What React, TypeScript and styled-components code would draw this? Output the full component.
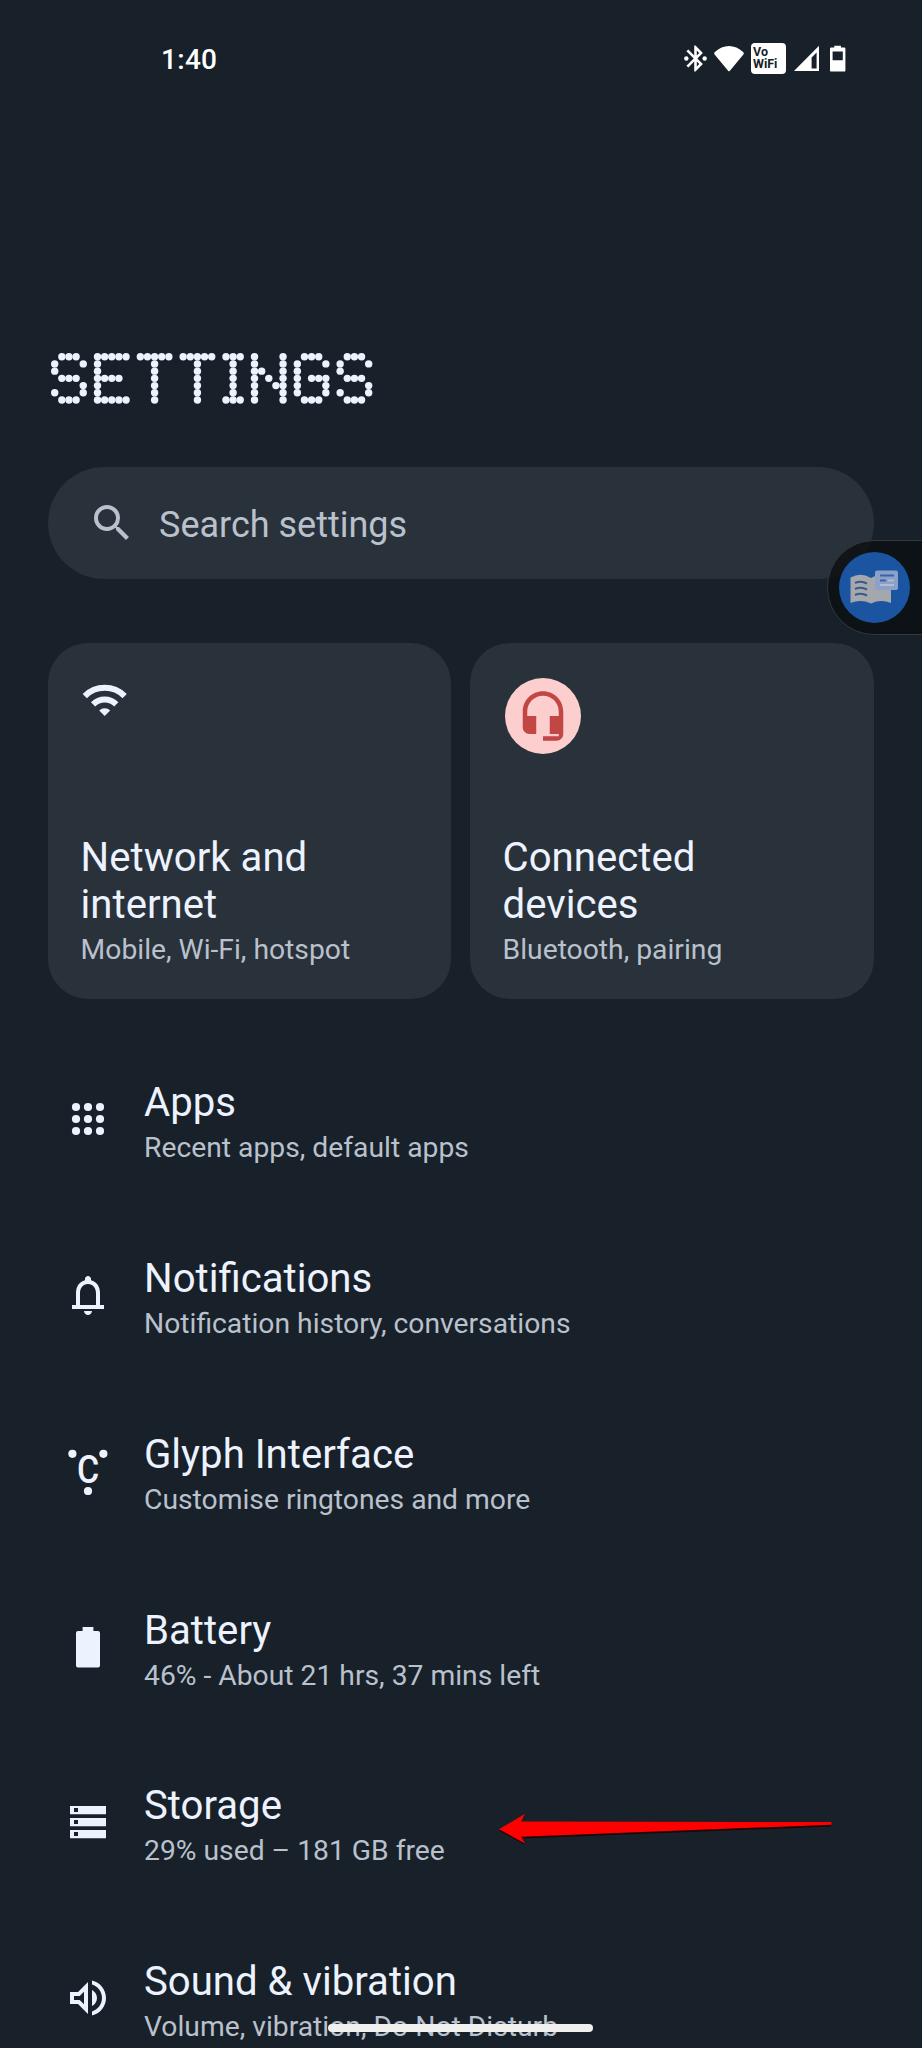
import React from 'react';
import styled, { createGlobalStyle } from 'styled-components';

const palette = {
  page: '#182029',
  surface: '#29313a',
  text: '#ecf2fe',
  muted: '#b9c1cd',
};

const GlobalStyle = createGlobalStyle`
  * { box-sizing: border-box; }
  html, body { margin: 0; padding: 0; background: ${palette.page}; }
  body { font-family: Roboto, "Noto Sans", sans-serif; overflow: hidden; }
`;

const Screen = styled.main`
  position: relative;
  width: 922px;
  height: 2048px;
  overflow: hidden;
  display: flex;
  flex-direction: column;
  background: ${palette.page};
  color: ${palette.text};
`;

const StatusBar = styled.header`
  flex: none;
  height: 116px;
  padding: 0 76px 0 161px;
  display: flex;
  align-items: center;
  justify-content: space-between;
`;

const Clock = styled.time`
  padding-top: 3px;
  font-size: 28px;
  font-weight: 500;
  letter-spacing: 0.3px;
  line-height: 34px;
  color: #fff;
`;

const StatusIcons = styled.div`
  display: flex;
  align-items: center;
  color: #fff;
  svg { display: block; }
`;

const VoWifi = styled.div`
  width: 35px;
  height: 31px;
  margin: 0 8px 0 6px;
  padding: 3px 0 0 2px;
  border-radius: 4px;
  background: #fff;
  color: ${palette.page};
  font-size: 12.5px;
  font-weight: 700;
  line-height: 12.4px;
`;

const Heading = styled.h1`
  flex: none;
  margin: 0;
  padding: 237px 0 0 51px;
  height: 350.7px;
  line-height: 0;
`;

const SearchBar = styled.div`
  flex: none;
  display: flex;
  align-items: center;
  width: 826px;
  height: 112px;
  margin: 0 48px;
  padding-left: 40px;
  gap: 23px;
  border-radius: 56px;
  background: ${palette.surface};
  color: ${palette.muted};
  font-size: 36px;
  line-height: 42px;
`;

const SearchHint = styled.span`
  padding-top: 4px;
`;

const Cards = styled.section`
  flex: none;
  display: grid;
  grid-template-columns: 403px 404px;
  column-gap: 19px;
  margin: 64.6px 48px 0;
`;

const Card = styled.article`
  height: 356px;
  padding: 35px 32px 31px 32.6px;
  display: flex;
  flex-direction: column;
  justify-content: space-between;
  border-radius: 40px;
  background: ${palette.surface};
`;

const DeviceBadge = styled.div`
  width: 76px;
  height: 76px;
  display: grid;
  place-items: center;
  margin-left: 2.4px;
  border-radius: 50%;
  background: #fccfce;
  color: #c14644;
`;

const Title = styled.h2`
  margin: 0 0 4px;
  font-size: 40.15px;
  font-weight: 400;
  line-height: 47px;
`;

const Summary = styled.p`
  margin: 0;
  font-size: 28.28px;
  line-height: 36px;
  color: ${palette.muted};
  white-space: nowrap;
`;

const List = styled.section`
  flex: none;
  display: flex;
  flex-direction: column;
  margin-top: 32px;
`;

const Row = styled.article`
  height: 175.8px;
  padding-left: 64px;
  display: flex;
  align-items: center;
  gap: 32px;
`;

const RowText = styled.div`
  padding-top: 7px;
`;

const AssistTab = styled.aside`
  position: absolute;
  top: 540px;
  right: -2px;
  width: 97.5px;
  height: 95px;
  padding-left: 11px;
  display: flex;
  align-items: center;
  border: 1px solid #33383d;
  border-radius: 47px 0 0 47px;
  background: rgba(11, 15, 19, 0.8);
`;

const AssistButton = styled.div`
  width: 71.5px;
  height: 71.5px;
  display: grid;
  place-items: center;
  border-radius: 50%;
  background: #1b54a0;
`;

const Pointer = styled.svg`
  position: absolute;
  left: 490px;
  top: 1806px;
`;

const HomeHandle = styled.div`
  position: absolute;
  left: 328px;
  bottom: 16px;
  width: 265px;
  height: 8px;
  border-radius: 4px;
  background: #f0f0ef;
`;

const GLYPHS: Record<string, string[]> = {
  S: ['.###.', '#...#', '#....', '.###.', '....#', '#...#', '.###.'],
  E: ['#####', '#....', '#....', '####.', '#....', '#....', '#####'],
  T: ['#####', '..#..', '..#..', '..#..', '..#..', '..#..', '..#..'],
  I: ['###', '.#.', '.#.', '.#.', '.#.', '.#.', '###'],
  N: ['#...#', '#...#', '##..#', '#.#.#', '#..##', '#...#', '#...#'],
  G: ['.###.', '#...#', '#....', '#.###', '#...#', '#...#', '.###.'],
};

// Dot-matrix display lettering: one round lamp per lit cell, one empty column between letters.
function DotMatrix({ word }: { word: string }) {
  const stepX = 7.136;
  const stepY = 7.22;
  let column = 0;
  const dots: React.ReactNode[] = [];
  word.split('').forEach((letter, n) => {
    const rows = GLYPHS[letter];
    rows.forEach((row, y) =>
      row.split('').forEach((cell, x) => {
        if (cell === '#') {
          dots.push(
            <circle key={`${n}-${x}-${y}`} cx={3.7 + (column + x) * stepX} cy={3.7 + y * stepY} r={3.7} />,
          );
        }
      }),
    );
    column += rows[0].length + 1;
  });
  return (
    <svg width="324" height="52" fill={palette.text} aria-hidden="true">
      {dots}
    </svg>
  );
}

const IconSvg = styled.svg`
  flex: none;
`;

function Icon({ size = 48, children }: { size?: number; children: React.ReactNode }) {
  return (
    <IconSvg width={size} height={size} viewBox="0 0 24 24" fill="currentColor">
      {children}
    </IconSvg>
  );
}

const items = [
  {
    title: 'Apps',
    summary: 'Recent apps, default apps',
    icon: (
      <>
        {[6, 12, 18].map((y) => [6, 12, 18].map((x) => <circle key={`${x}${y}`} cx={x} cy={y} r="2.05" />))}
      </>
    ),
  },
  {
    title: 'Notifications',
    summary: 'Notification history, conversations',
    icon: (
      <path
        fillRule="evenodd"
        d="M18 17v-6c0-3.07-1.63-5.64-4.5-6.32V4c0-.83-.67-1.5-1.5-1.5s-1.5.67-1.5 1.5v.68C7.64 5.36 6 7.92 6 11v6H4v2h16v-2h-2zm-2 0H8v-6c0-2.48 1.51-4.5 4-4.5s4 2.02 4 4.5v6zM12 22c1.1 0 2-.9 2-2h-4c0 1.1.9 2 2 2z"
      />
    ),
  },
  {
    title: 'Glyph Interface',
    summary: 'Customise ringtones and more',
    icon: (
      <>
        <circle cx="4.2" cy="3.4" r="2.05" />
        <circle cx="19.7" cy="3.4" r="2.05" />
        <circle cx="12" cy="22" r="2.05" />
        <text transform="translate(12 17.9) scale(.88 1)" fontSize="19.3" fontWeight="500" textAnchor="middle">
          C
        </text>
      </>
    ),
  },
  {
    title: 'Battery',
    summary: '46% - About 21 hrs, 37 mins left',
    icon: <path d="M17 4h-2.3V2H9.3v2H7a1 1 0 0 0-1 1v16.3a1 1 0 0 0 1 1h10a1 1 0 0 0 1-1V5a1 1 0 0 0-1-1z" />,
  },
  {
    title: 'Storage',
    summary: '29% used – 181 GB free',
    icon: (
      <path
        fillRule="evenodd"
        d="M3 4h18v4.1H3zM5 5v2h2V5zM3 10h18v4.1H3zM5 11v2h2v-2zM3 16h18v4.1H3zM5 17v2h2v-2z"
      />
    ),
  },
  {
    title: 'Sound & vibration',
    summary: 'Volume, vibration, Do Not Disturb',
    icon: (
      <path d="M3 9v6h4l5 5V4L7 9H3zm7-.17v6.34L7.83 13H5v-2h2.83L10 8.83zM16.5 12c0-1.77-1.02-3.29-2.5-4.03v8.05c1.48-.73 2.5-2.25 2.5-4.02zM14 3.23v2.06c2.89.86 5 3.54 5 6.71s-2.11 5.85-5 6.71v2.06c4.01-.91 7-4.49 7-8.77s-2.99-7.86-7-8.77z" />
    ),
  },
];

export default function App() {
  return (
    <Screen>
      <GlobalStyle />
      <StatusBar>
        <Clock>1:40</Clock>
        <StatusIcons>
          <svg width="31" height="31" viewBox="0 0 24 24" fill="currentColor">
            <circle cx="4.9" cy="12" r="1.7" />
            <circle cx="19.1" cy="12" r="1.7" />
            <path d="M17.71 7.71L12 2h-1v7.59L6.41 5 5 6.41 10.59 12 5 17.59 6.41 19 11 14.41V22h1l5.71-5.71-4.3-4.29 4.3-4.29zM13 5.83l1.88 1.88L13 9.59V5.83zm1.88 10.46L13 18.17v-3.76l1.88 1.88z" />
          </svg>
          <svg width="34" height="31" viewBox="-1 0 34 31" fill="currentColor">
            <path d="M17.7 28Q17 28.600 16.300 28L2.400 11.200Q1.700 10 2.900 9.100C11 .9 23 .9 31.100 9.100Q32.300 10 31.600 11.200z" />
          </svg>
          <VoWifi>
            Vo
            <br />
            WiFi
          </VoWifi>
          <svg width="26" height="27" viewBox="0 0 26 27" fill="currentColor">
            <path fillRule="evenodd" d="M0 26L25 .8V26zM17.600 12.500V23.600H22.600V7.400z" />
          </svg>
          <svg width="26" height="27" viewBox="0 0 26 27" fill="currentColor">
            <path
              fillRule="evenodd"
              d="M14.300 .8h6.600v1.800h3.300a1.200 1.200 0 0 1 1.200 1.200v21.600a1.200 1.200 0 0 1-1.200 1.200H11.200a1.200 1.200 0 0 1-1.200-1.200V3.800a1.200 1.200 0 0 1 1.200-1.200h3.100zM12.600 6.600v8.600h10.200V6.600z"
            />
          </svg>
        </StatusIcons>
      </StatusBar>

      <Heading aria-label="SETTINGS">
        <DotMatrix word="SETTINGS" />
      </Heading>

      <SearchBar>
        <Icon>
          <path d="M15.5 14h-.79l-.28-.27A6.471 6.471 0 0 0 16 9.500 6.500 6.500 0 1 0 9.500 16c1.610 0 3.090-.59 4.230-1.570l.27.28v.79l5 4.990L20.490 19l-4.990-5zm-6 0C7.010 14 5 11.990 5 9.500S7.010 5 9.500 5 14 7.010 14 9.500 11.990 14 9.500 14z" />
        </Icon>
        <SearchHint>Search settings</SearchHint>
      </SearchBar>

      <Cards>
        <Card>
          <svg width="48" height="46" viewBox="0.6 0 48 46" fill="none" stroke={palette.text} strokeWidth="6">
            <path d="M4.360 18.060a28.200 28.200 0 0 1 39.880 0M12.700 26.400a16.400 16.400 0 0 1 23.200 0" />
            <path stroke="none" fill={palette.text} d="M24.300 38l-5.500-5.600a7.800 7.800 0 0 1 11 0z" />
          </svg>
          <div>
            <Title>Network and internet</Title>
            <Summary>Mobile, Wi-Fi, hotspot</Summary>
          </div>
        </Card>
        <Card>
          <DeviceBadge>
            <Icon size={54}>
              <path d="M12 1c-4.970 0-9 4.030-9 9v7c0 1.660 1.340 3 3 3h3v-8H5v-2c0-3.870 3.130-7 7-7s7 3.130 7 7v2h-4v8h4v1h-7v2h6c1.660 0 3-1.340 3-3V10c0-4.970-4.030-9-9-9z" />
            </Icon>
          </DeviceBadge>
          <div>
            <Title>
              Connected
              <br />
              devices
            </Title>
            <Summary>Bluetooth, pairing</Summary>
          </div>
        </Card>
      </Cards>

      <List>
        {items.map((item) => (
          <Row key={item.title}>
            <Icon>{item.icon}</Icon>
            <RowText>
              <Title>{item.title}</Title>
              <Summary>{item.summary}</Summary>
            </RowText>
          </Row>
        ))}
      </List>

      <AssistTab>
        <AssistButton>
          <svg width="50" height="38" viewBox="0 0 50 38">
            <path d="M1.500 8.500Q12 3 22 9Q32 3 42 8.500V34Q32 30 22 34.500Q12 30 1.500 34z" fill="#a4a7ac" />
            <path d="M6 14q6-2.500 12 .5M6 20q6-2.500 12 .5M6 26q6-2.500 12 .5" fill="none" stroke="#3a5a8c" strokeWidth="2" />
            <rect x="26" y="1.500" width="23" height="19.500" rx="2" fill="#8ba1c9" />
            <path d="M31 6.500h14M31 11.500h6" stroke="#3a64a8" strokeWidth="1.800" />
            <path d="M39 11.500h6M31 16h14" stroke="#b4bccb" strokeWidth="1.800" />
          </svg>
        </AssistButton>
      </AssistTab>

      <Pointer width="350" height="46" viewBox="0 0 350 46">
        <path d="M9 24.500L35 9L31 16.500L341 17V20.500L31 32.500L35 39z" fill="#1d0507" />
        <path d="M9 23.300L35 7.800L31.300 15.500L341.500 16V18.700L31.300 30.800L35 37.500z" fill="#fd0000" />
      </Pointer>
      <HomeHandle />
    </Screen>
  );
}
